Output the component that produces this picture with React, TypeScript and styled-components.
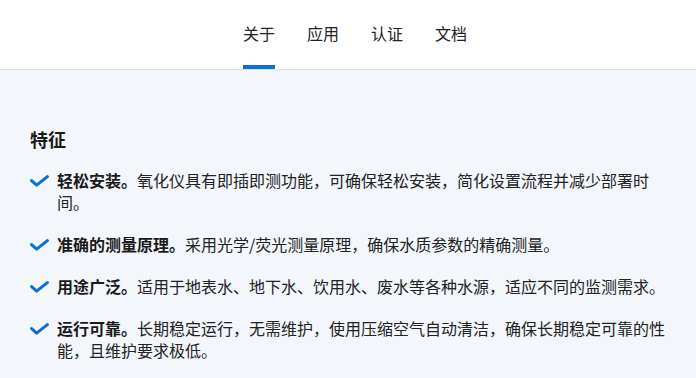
import React from "react";
import styled, { createGlobalStyle } from "styled-components";

const GlobalStyle = createGlobalStyle`
  html, body {
    margin: 0;
    padding: 0;
    background: #f3f6fb;
  }
  body {
    font-family: "Noto Sans CJK SC", "Noto Sans", sans-serif;
    color: #222;
  }
`;

const Header = styled.header`
  height: 69px;
  background: #fff;
  border-bottom: 1px solid #d9dce1;
  display: flex;
  justify-content: center;
`;

const Tabs = styled.nav`
  display: flex;
  gap: 32px;
  padding-left: 14px;
`;

const Tab = styled.a<{ $active?: boolean }>`
  position: relative;
  display: block;
  padding-top: 22px;
  font-size: 16px;
  line-height: 22px;
  color: #222;
  text-decoration: none;
  cursor: pointer;
  &::after {
    content: "";
    position: absolute;
    left: 0;
    right: 0;
    bottom: 0;
    height: 4px;
    background: ${(p) => (p.$active ? "#0a6fd6" : "transparent")};
  }
`;

const Main = styled.main`
  padding: 57px 30px 30px;
`;

const Title = styled.h2`
  margin: 0 0 18px;
  font-size: 18px;
  line-height: 24px;
  font-weight: 700;
  color: #1a1a1a;
`;

const List = styled.ul`
  list-style: none;
  margin: 0;
  padding: 0;
  display: flex;
  flex-direction: column;
  gap: 20px;
`;

const Item = styled.li`
  display: flex;
  align-items: flex-start;
`;

const Check = styled.svg`
  flex: none;
  width: 19px;
  height: 12px;
  margin-top: 6px;
  margin-right: 8px;
`;

const Text = styled.p`
  margin: 0;
  width: 614px;
  font-size: 16px;
  line-height: 22px;
  color: #222;
`;

const Lead = styled.strong`
  font-weight: 700;
  color: #1a1a1a;
`;

const tabs = [
  { name: "关于", active: true },
  { name: "应用" },
  { name: "认证" },
  { name: "文档" },
];

const features = [
  {
    title: "轻松安装。",
    body: "氧化仪具有即插即测功能，可确保轻松安装，简化设置流程并减少部署时间。",
  },
  {
    title: "准确的测量原理。",
    body: "采用光学/荧光测量原理，确保水质参数的精确测量。",
  },
  {
    title: "用途广泛。",
    body: "适用于地表水、地下水、饮用水、废水等各种水源，适应不同的监测需求。",
  },
  {
    title: "运行可靠。",
    body: "长期稳定运行，无需维护，使用压缩空气自动清洁，确保长期稳定可靠的性能，且维护要求极低。",
  },
];

function CheckIcon() {
  return (
    <Check viewBox="0 0 19 12" fill="none">
      <path
        d="M1.6 5.6 L6.6 10.2 L17.4 1.6"
        stroke="#0a6fd6"
        strokeWidth="3"
        strokeLinecap="round"
        strokeLinejoin="round"
      />
    </Check>
  );
}

export default function App() {
  return (
    <>
      <GlobalStyle />
      <Header>
        <Tabs>
          {tabs.map((t) => (
            <Tab key={t.name} $active={t.active}>
              {t.name}
            </Tab>
          ))}
        </Tabs>
      </Header>
      <Main>
        <Title>特征</Title>
        <List>
          {features.map((f) => (
            <Item key={f.title}>
              <CheckIcon />
              <Text>
                <Lead>{f.title}</Lead>
                {f.body}
              </Text>
            </Item>
          ))}
        </List>
      </Main>
    </>
  );
}
